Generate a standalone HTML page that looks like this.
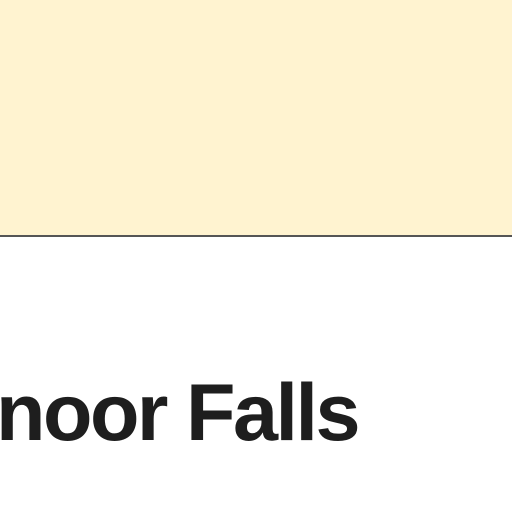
<!DOCTYPE html>
<html><head><style>
body{margin:0;width:512px;height:512px;overflow:hidden;background:#fff;position:relative;font-family:"Liberation Sans",sans-serif}
.top{position:absolute;left:0;top:0;width:512px;height:235px;background:#fff3d0;border-bottom:2px solid #555}
.t{position:absolute;left:-4px;top:363px;font-size:81px;font-weight:bold;color:#1e1e1e;letter-spacing:-2.5px;line-height:100px;white-space:nowrap}
</style></head><body>
<div class="top"></div>
<div class="t">noor Falls</div>
</body></html>
